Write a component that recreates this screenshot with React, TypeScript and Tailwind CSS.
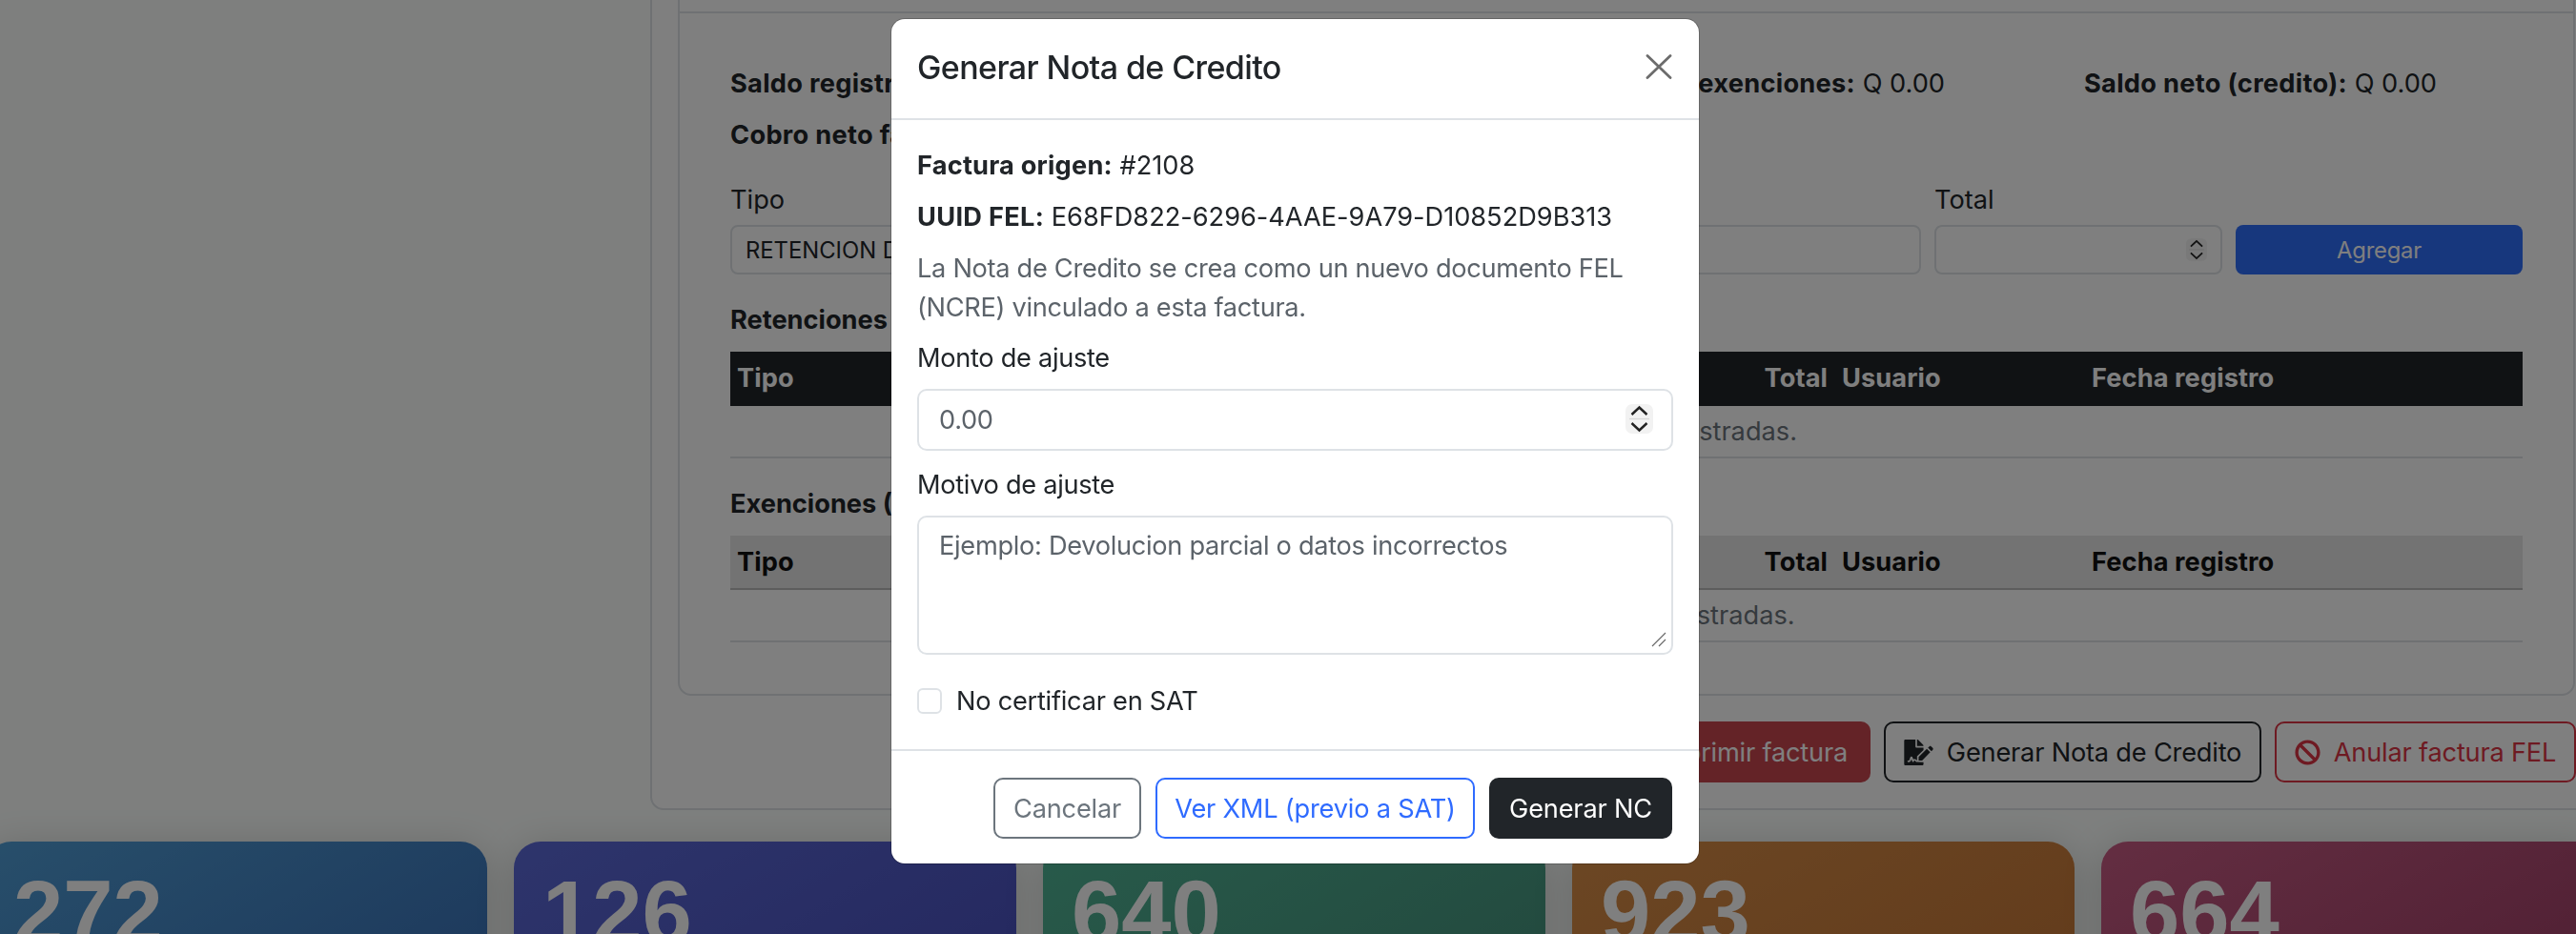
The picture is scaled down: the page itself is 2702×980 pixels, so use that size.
import { FaBan, FaFileSignature, FaPrint } from 'react-icons/fa';

const Spinner = ({ className }: { className: string }): JSX.Element => (
  <svg className={className} viewBox="0 0 29 31" aria-hidden="true">
    <rect width="29" height="31" rx="7" fill="#f2f2f2" />
    <path d="M6.5 11 14.5 3.5 22.5 11" fill="none" stroke="#222222" strokeWidth="2.4" />
    <path d="M6.5 20 14.5 27.5 22.5 20" fill="none" stroke="#222222" strokeWidth="2.4" />
    <path d="M4 15.5H25" stroke="#d8d8d8" strokeWidth="1.2" />
  </svg>
);

const DataTable = ({ dark, empty }: { dark: boolean; empty: string }): JSX.Element => (
  <table className="w-full table-fixed border-collapse">
    <thead>
      <tr className={dark ? 'bg-[#212529] text-white' : 'bg-[#e6e6e6] text-[#111]'}>
        {[
          ['Tipo', 'pl-[7px] text-left'],
          ['Total', 'w-[200px] px-[8px] text-right'],
          ['Usuario', 'w-[261px] pl-[7px] pr-[8px] text-left'],
          ['Fecha registro', 'w-[460px] px-[8px] text-left']
        ].map(([label, cls]) => (
          <th
            key={label}
            className={`${cls} h-[56px] font-bold tracking-[0.1px] border-b-2 ${dark ? 'border-[#212529]' : 'border-[#bbbbbb]'}`}
          >
            {label}
          </th>
        ))}
      </tr>
    </thead>
    <tbody>
      <tr>
        <td colSpan={4} className="h-[55px] text-center text-[#6c757d] border-b-2 border-[#dee2e6]">
          {empty}
        </td>
      </tr>
    </tbody>
  </table>
);

const StatCard = ({ value, gradient }: { value: string; gradient: string }): JSX.Element => (
  <div className={`${gradient} w-[527px] h-[300px] shrink-0 rounded-[28px] pt-[28px] pl-[30px] shadow-[0_6px_40px_rgba(0,0,0,0.18)]`}>
    <div className="font-['Liberation_Sans',Arial,sans-serif] font-bold text-[94px] leading-[94px] text-white">{value}</div>
  </div>
);

const App = (): JSX.Element => {
  return (
    <div className="relative w-[2702px] h-[980px] overflow-hidden bg-[#fcfffd] font-['Inter',sans-serif] text-[27.2px] leading-[41px] text-[#212529]">
      <div className="ml-[682px] w-[2060px] h-[890px] -mt-[40px] border-2 border-[#dee2e6] rounded-[14px] pl-[27px] bg-white">
        <div className="w-[1990px] h-[768px] border-2 border-[#dee2e6] rounded-[14px]">
          <div className="h-[50px] border-b-2 border-[#dee2e6]" />
          <div className="pt-[53px] px-[53px]">
            <div className="flex">
              <div className="flex-1">
                <b className="tracking-[0.3px]">Saldo registrado:</b> Q 0.00
              </div>
              <div>
                <b className="tracking-[0.3px]">Total exenciones:</b> Q 0.00
              </div>
              <div className="w-[606px] pl-[146px] shrink-0">
                <b className="tracking-[0.3px]">Saldo neto (credito):</b> Q 0.00
              </div>
            </div>
            <div className="mt-[13px]">
              <b className="tracking-[0.3px]">Cobro neto factura:</b> Q 0.00
            </div>
            <div className="mt-[26px] flex gap-[14px] items-end">
              <div className="flex-1">
                <div className="mb-[7px] relative top-[1px]">Tipo</div>
                <select className="w-full h-[52px] appearance-none border-2 border-[#dee2e6] rounded-[8px] px-[14px] text-[23.8px] bg-white">
                  <option>RETENCION DEFINITIVA</option>
                </select>
              </div>
              <div className="w-[600px]">
                <div className="h-[52px] border-2 border-[#dee2e6] rounded-[8px]" />
              </div>
              <div className="w-[302px]">
                <div className="mb-[7px] relative top-[1px]">Total</div>
                <div className="relative h-[52px] border-2 border-[#dee2e6] rounded-[8px]">
                  <Spinner className="absolute right-[14px] top-[9px] w-[22px] h-[30px]" />
                </div>
              </div>
              <button className="w-[301px] h-[52px] rounded-[8px] bg-[#2f6efa] text-[23.8px] text-white tracking-[-0.2px]" type="button">
                Agregar
              </button>
            </div>
            <div className="mt-[27px] mb-[13px] font-bold">Retenciones (0)</div>
            <DataTable dark empty="Sin retenciones registradas." />
            <div className="mt-[27px] mb-[13px] font-bold">Exenciones (0)</div>
            <DataTable dark={false} empty="Sin exenciones registradas." />
          </div>
        </div>
        <div className="mt-[27px] flex justify-end gap-[14px] pr-[38px] text-[27.2px] tracking-[-0.2px]">
          <button className="h-[64px] px-[24px] rounded-[10px] bg-[#c8464f] text-white inline-flex items-center gap-[12px]" type="button">
            <FaPrint className="w-[26px] h-[26px]" />
            Imprimir factura
          </button>
          <button className="h-[64px] w-[396px] rounded-[10px] border-2 border-[#212529] inline-flex items-center justify-center gap-[14px]" type="button">
            <FaFileSignature className="w-[31px] h-[27px]" />
            Generar Nota de Credito
          </button>
          <button className="h-[64px] w-[316px] rounded-[10px] border-2 border-[#dc3545] text-[#dc3545] inline-flex items-center justify-center gap-[14px]" type="button">
            <FaBan className="w-[27px] h-[27px]" />
            Anular factura FEL
          </button>
        </div>
      </div>

      <div className="absolute left-0 right-0 top-[883px] -ml-[16px] flex gap-[28px]">
        <StatCard value="272" gradient="bg-gradient-to-br from-[#509ed6] to-[#3462ae]" />
        <StatCard value="126" gradient="bg-gradient-to-br from-[#5c6ad8] to-[#4448b6]" />
        <StatCard value="640" gradient="bg-gradient-to-br from-[#50b696] to-[#428674]" />
        <StatCard value="923" gradient="bg-gradient-to-br from-[#d88e48] to-[#c07032]" />
        <StatCard value="664" gradient="bg-gradient-to-br from-[#c85c84] to-[#92365e]" />
      </div>

      <div className="fixed inset-0 bg-black/50">
        <div className="ml-[935px] mt-[20px] w-[847px] h-[886px] bg-white rounded-[14px] flex flex-col shadow-[0_0_0_1px_rgba(0,0,0,0.2)]">
          <div className="h-[106px] shrink-0 border-b-2 border-[#dee2e6] pl-[27px] pr-[28px] flex items-center justify-between pb-[4px]">
            <h5 className="text-[34px] leading-[51px] font-medium tracking-[-0.6px]">Generar Nota de Credito</h5>
            <button className="w-[28px] h-[26px] text-[#6c6c6c]" type="button" aria-label="Cerrar">
              <svg viewBox="0 0 28 26" fill="none" stroke="currentColor" strokeWidth="2.8" strokeLinecap="round" className="w-[28px] h-[26px]">
                <path d="M2 1.5 26 24.5M26 1.5 2 24.5" />
              </svg>
            </button>
          </div>
          <div className="flex-1 px-[27px] pt-[27px]">
            <p className="mb-[13px]">
              <b className="font-bold tracking-[0.2px]">Factura origen:</b> #2108
            </p>
            <p className="mb-[13px] tracking-[-0.02px]">
              <b className="font-bold tracking-[0.3px]">UUID FEL:</b> E68FD822-6296-4AAE-9A79-D10852D9B313
            </p>
            <p className="mb-[12px] text-[#5c636a] tracking-[-0.3px]">La Nota de Credito se crea como un nuevo documento FEL (NCRE) vinculado a esta factura.</p>
            <label className="block mb-[12px] tracking-[-0.3px]">Monto de ajuste</label>
            <div className="relative h-[65px]">
              <input
                type="number"
                placeholder="0.00"
                className="w-full h-full border-2 border-[#dee2e6] rounded-[10px] px-[21px] placeholder:text-[#5c636a] [appearance:textfield] tracking-[-0.3px]"
              />
              <Spinner className="absolute right-[21px] top-[16px] w-[29px] h-[31px]" />
            </div>
            <label className="block mt-[15px] mb-[12px] tracking-[-0.3px]">Motivo de ajuste</label>
            <div className="relative">
              <textarea
                rows={3}
                placeholder="Ejemplo: Devolucion parcial o datos incorrectos"
                className="block w-full h-[146px] border-2 border-[#dee2e6] rounded-[10px] px-[21px] py-[9px] resize-none placeholder:text-[#5c636a] tracking-[-0.3px]"
              />
              <svg className="absolute right-[7px] bottom-[8px] w-[16px] h-[16px]" viewBox="0 0 16 16" fill="none" stroke="#6a6a6a" strokeWidth="1.2" aria-hidden="true">
                <path d="M1 15 15 1M8 15 15 8" />
              </svg>
            </div>
            <label className="mt-[28px] flex items-center gap-[15px] tracking-[-0.25px]">
              <input type="checkbox" className="appearance-none w-[26px] h-[27px] border-2 border-[#dee2e6] rounded-[6px]" />
              No certificar en SAT
            </label>
          </div>
          <div className="h-[120px] shrink-0 border-t-2 border-[#dee2e6] pt-[28px] pr-[28px] flex justify-end gap-[15px] tracking-[-0.2px]">
            <button className="h-[64px] w-[155px] border-2 border-[#6c757d] rounded-[10px] text-[#6c757d]" type="button">
              Cancelar
            </button>
            <button className="h-[64px] w-[335px] border-2 border-[#2f6bff] rounded-[10px] text-[#2f6bff]" type="button">
              Ver XML (previo a SAT)
            </button>
            <button className="h-[64px] w-[192px] bg-[#212529] rounded-[10px] text-white" type="button">
              Generar NC
            </button>
          </div>
        </div>
      </div>
    </div>
  );
};

export default App;
